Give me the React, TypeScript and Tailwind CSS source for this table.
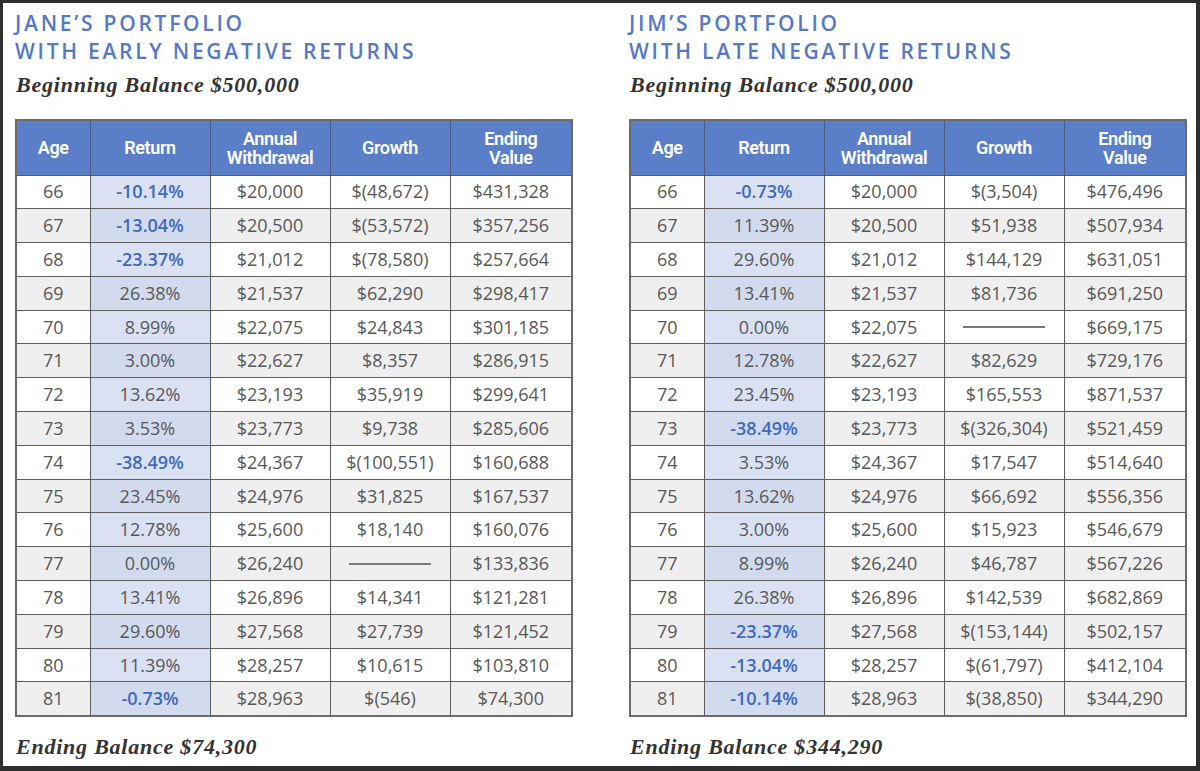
import React from 'react';

type Row = [number, string, string, string, string];

const janeRows: Row[] = [
  [66, '-10.14%', '$20,000', '$(48,672)', '$431,328'],
  [67, '-13.04%', '$20,500', '$(53,572)', '$357,256'],
  [68, '-23.37%', '$21,012', '$(78,580)', '$257,664'],
  [69, '26.38%', '$21,537', '$62,290', '$298,417'],
  [70, '8.99%', '$22,075', '$24,843', '$301,185'],
  [71, '3.00%', '$22,627', '$8,357', '$286,915'],
  [72, '13.62%', '$23,193', '$35,919', '$299,641'],
  [73, '3.53%', '$23,773', '$9,738', '$285,606'],
  [74, '-38.49%', '$24,367', '$(100,551)', '$160,688'],
  [75, '23.45%', '$24,976', '$31,825', '$167,537'],
  [76, '12.78%', '$25,600', '$18,140', '$160,076'],
  [77, '0.00%', '$26,240', '', '$133,836'],
  [78, '13.41%', '$26,896', '$14,341', '$121,281'],
  [79, '29.60%', '$27,568', '$27,739', '$121,452'],
  [80, '11.39%', '$28,257', '$10,615', '$103,810'],
  [81, '-0.73%', '$28,963', '$(546)', '$74,300'],
];

const jimRows: Row[] = [
  [66, '-0.73%', '$20,000', '$(3,504)', '$476,496'],
  [67, '11.39%', '$20,500', '$51,938', '$507,934'],
  [68, '29.60%', '$21,012', '$144,129', '$631,051'],
  [69, '13.41%', '$21,537', '$81,736', '$691,250'],
  [70, '0.00%', '$22,075', '', '$669,175'],
  [71, '12.78%', '$22,627', '$82,629', '$729,176'],
  [72, '23.45%', '$23,193', '$165,553', '$871,537'],
  [73, '-38.49%', '$23,773', '$(326,304)', '$521,459'],
  [74, '3.53%', '$24,367', '$17,547', '$514,640'],
  [75, '13.62%', '$24,976', '$66,692', '$556,356'],
  [76, '3.00%', '$25,600', '$15,923', '$546,679'],
  [77, '8.99%', '$26,240', '$46,787', '$567,226'],
  [78, '26.38%', '$26,896', '$142,539', '$682,869'],
  [79, '-23.37%', '$27,568', '$(153,144)', '$502,157'],
  [80, '-13.04%', '$28,257', '$(61,797)', '$412,104'],
  [81, '-10.14%', '$28,963', '$(38,850)', '$344,290'],
];

const serif = { fontFamily: '"Liberation Serif", "Times New Roman", serif' };

const Portfolio: React.FC<{ name: string; subtitle: string; ending: string; rows: Row[] }> = ({
  name,
  subtitle,
  ending,
  rows,
}) => (
  <div className="flex flex-col w-[556px]">
    {/* title block */}
    <div className="text-[21px] leading-[28px] font-semibold tracking-[0.13em] text-[#5579c4] pt-[6px] font-['Open_Sans',sans-serif]">
      <div>{name}</div>
      <div>{subtitle}</div>
    </div>
    <div
      className="mt-[7px] text-[22px] leading-[26px] font-bold italic tracking-[0.035em] text-[#333] pl-px"
      style={serif}
    >
      Beginning Balance $500,000
    </div>

    <table className="mt-[21px] border-collapse border-2 border-[#6a6a6a] table-fixed w-[556px] text-[18px] text-[#585858] font-['Open_Sans',sans-serif]">
      <colgroup>
        <col className="w-[74px]" />
        <col className="w-[120px]" />
        <col className="w-[120px]" />
        <col className="w-[120px]" />
        <col className="w-[122px]" />
      </colgroup>
      <thead>
        <tr className="h-[55px] bg-[#5b7ec8] text-white font-['Roboto',sans-serif] text-[18px] leading-[19px] tracking-[-0.02em]">
          <th className="border border-[#4b5b80] font-semibold">Age</th>
          <th className="border border-[#4b5b80] font-semibold">Return</th>
          <th className="border border-[#4b5b80] font-semibold">
            Annual
            <br />
            Withdrawal
          </th>
          <th className="border border-[#4b5b80] font-semibold">Growth</th>
          <th className="border border-[#4b5b80] font-semibold">
            Ending
            <br />
            Value
          </th>
        </tr>
      </thead>
      <tbody>
        {rows.map((r, i) => {
          const neg = r[1].startsWith('-');
          const gray = i % 2 === 1;
          return (
            <tr key={r[0]} className={`h-[33.8px] ${gray ? 'bg-[#efefef]' : 'bg-white'}`}>
              <td className="border border-[#5e5e5e] text-center p-0">{r[0]}</td>
              <td
                className={`border border-[#5e5e5e] text-center p-0 ${gray ? 'bg-[#d2daee]' : 'bg-[#dae1f3]'} ${
                  neg ? 'text-[#3e69c0] font-semibold' : ''
                }`}
              >
                {r[1]}
              </td>
              <td className="border border-[#5e5e5e] text-center p-0">{r[2]}</td>
              <td className="border border-[#5e5e5e] text-center p-0">
                {r[3] ? r[3] : <div className="mx-auto w-[82px] h-[2px] bg-[#7a7a7a]" />}
              </td>
              <td className="border border-[#5e5e5e] text-center p-0">{r[4]}</td>
            </tr>
          );
        })}
      </tbody>
    </table>

    <div
      className="mt-[17px] text-[22px] leading-[26px] font-bold italic tracking-[0.035em] text-[#333] pl-px"
      style={serif}
    >
      Ending Balance {ending}
    </div>
  </div>
);

const App: React.FC = () => {
  return (
    <div className="w-[1200px] h-[771px] bg-[#2e2e2e] pt-[3px] pl-[3px] pr-[4px] pb-[5px]">
      <div className="w-full h-full bg-white flex gap-[58px] pl-[12px]">
        <Portfolio
          name="JANE’S PORTFOLIO"
          subtitle="WITH EARLY NEGATIVE RETURNS"
          ending="$74,300"
          rows={janeRows}
        />
        <Portfolio
          name="JIM’S PORTFOLIO"
          subtitle="WITH LATE NEGATIVE RETURNS"
          ending="$344,290"
          rows={jimRows}
        />
      </div>
    </div>
  );
};

export default App;
